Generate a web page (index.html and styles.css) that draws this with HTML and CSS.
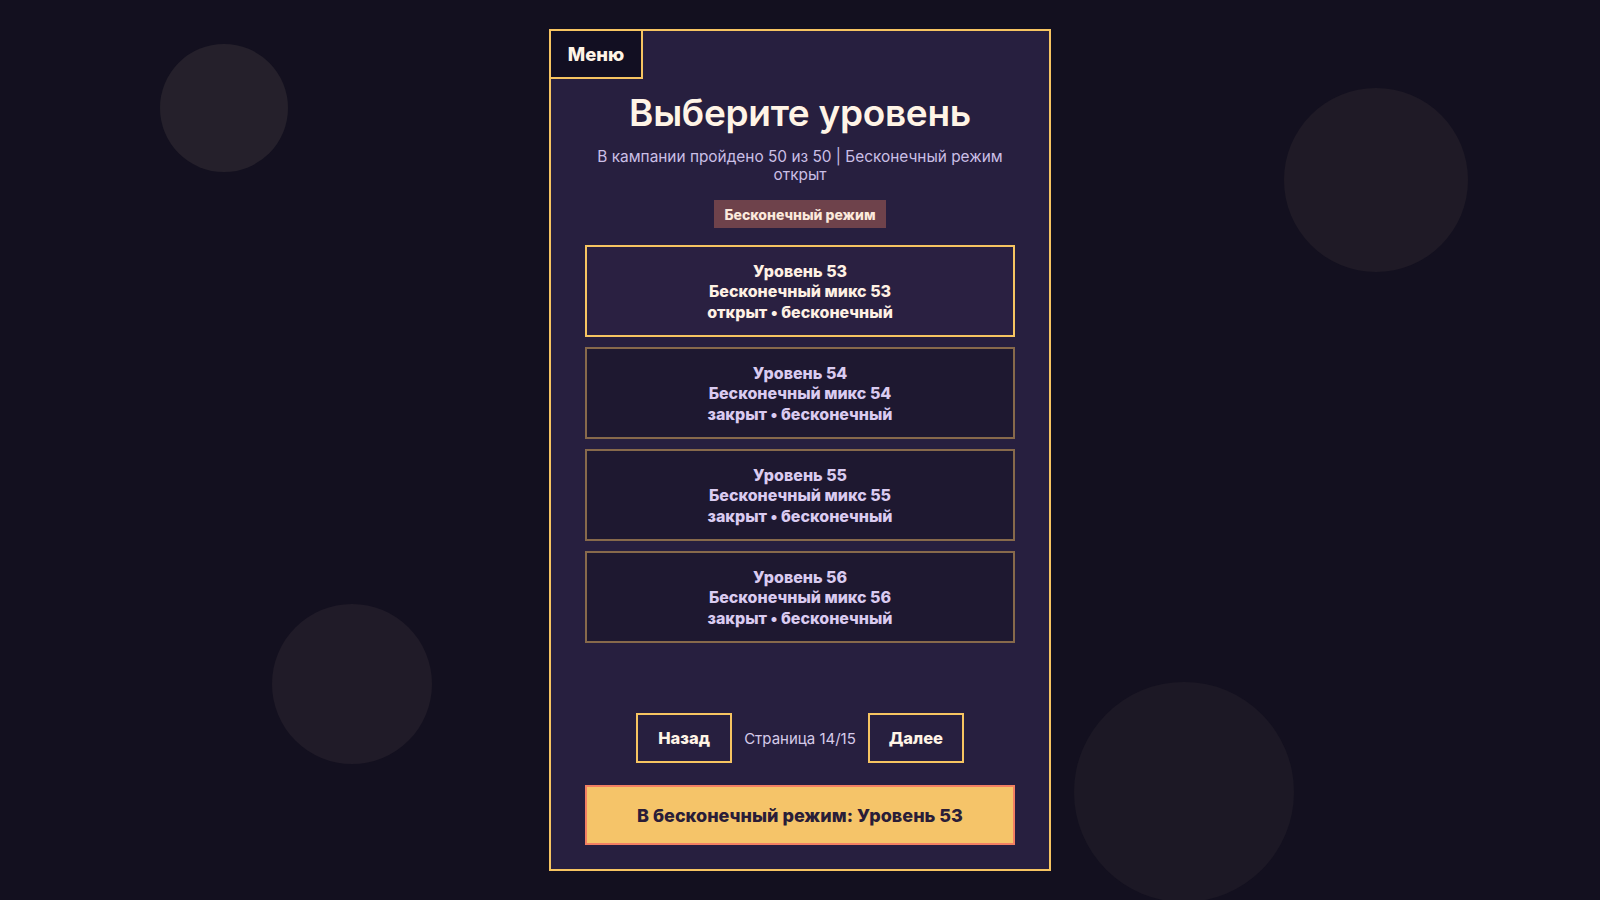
FILE: index.html
```html
<!DOCTYPE html>
<html lang="ru">
<head>
<meta charset="utf-8">
<title>Выберите уровень</title>
<link rel="stylesheet" href="styles.css">
</head>
<body>
<div class="bg-circle c1"></div>
<div class="bg-circle c2"></div>
<div class="bg-circle c3"></div>
<div class="bg-circle c4"></div>

<main class="panel">
  <button class="menu-btn">Меню</button>
  <h1 class="title">Выберите уровень</h1>
  <p class="subtitle">В кампании пройдено 50 из 50 | Бесконечный режим открыт</p>
  <div class="badge">Бесконечный режим</div>

  <div class="levels">
    <div class="level open">
      <span>Уровень 53</span>
      <span>Бесконечный микс 53</span>
      <span>открыт • бесконечный</span>
    </div>
    <div class="level locked">
      <span>Уровень 54</span>
      <span>Бесконечный микс 54</span>
      <span>закрыт • бесконечный</span>
    </div>
    <div class="level locked">
      <span>Уровень 55</span>
      <span>Бесконечный микс 55</span>
      <span>закрыт • бесконечный</span>
    </div>
    <div class="level locked">
      <span>Уровень 56</span>
      <span>Бесконечный микс 56</span>
      <span>закрыт • бесконечный</span>
    </div>
  </div>

  <div class="pager">
    <button class="pager-btn">Назад</button>
    <span class="pager-text">Страница 14/15</span>
    <button class="pager-btn">Далее</button>
  </div>

  <button class="cta">В бесконечный режим: Уровень 53</button>
</main>
</body>
</html>
```

FILE: styles.css
```css
* { box-sizing: border-box; }

html, body {
  margin: 0;
  padding: 0;
  width: 1600px;
  height: 900px;
  overflow: hidden;
  background: #13101f;
  font-family: Inter, "Noto Sans", sans-serif;
}

body {
  position: relative;
  padding-top: 29px;
}

.bg-circle {
  position: absolute;
  border-radius: 50%;
  background: #211c29;
}
.c1 { left: 160px; top: 44px; width: 128px; height: 128px; background: #25202b; }
.c2 { left: 1284px; top: 88px; width: 184px; height: 184px; background: #1f1a26; }
.c3 { left: 272px; top: 604px; width: 160px; height: 160px; background: #201b28; }
.c4 { left: 1074px; top: 682px; width: 220px; height: 220px; background: #1c1825; }

.panel {
  position: relative;
  width: 502px;
  height: 842px;
  margin: 0 auto;
  border: 2px solid #f6c461;
  background: #271f3f;
  padding: 61px 34px 24px;
  display: flex;
  flex-direction: column;
  align-items: center;
}

.menu-btn {
  position: absolute;
  top: -2px;
  left: -2px;
  width: 94px;
  height: 50px;
  border: 2px solid #f6c461;
  background: #120f22;
  color: #fff4e6;
  font-family: inherit;
  font-size: 18.5px;
  font-weight: 800;
  padding: 0;
}

.title {
  margin: 0;
  color: #fff4e6;
  font-size: 37px;
  font-weight: 600;
  line-height: 42px;
  letter-spacing: -0.3px;
}

.subtitle {
  margin: 14px 0 0;
  color: #cbbfe6;
  font-size: 15.4px;
  line-height: 18px;
  text-align: center;
  max-width: 420px;
}

.badge {
  margin-top: 16px;
  height: 28px;
  padding: 0 10px;
  display: flex;
  align-items: center;
  background: #6e424b;
  color: #fbe9dc;
  font-size: 14px;
  font-weight: 800;
}

.levels {
  margin-top: 17px;
  width: 430px;
  display: flex;
  flex-direction: column;
  gap: 10px;
  flex: 1;
}

.level {
  height: 92px;
  display: flex;
  flex-direction: column;
  align-items: center;
  justify-content: center;
  padding-top: 1px;
  font-size: 16px;
  font-weight: 800;
  line-height: 20.4px;
}
.level.open {
  border: 2px solid #f6c461;
  background: #2a2041;
  color: #fff1e4;
}
.level.locked {
  border: 2px solid #87694b;
  background: #1e1830;
  color: #dacbf0;
}

.pager {
  display: flex;
  align-items: center;
  gap: 12px;
}

.pager-btn {
  width: 96px;
  height: 50px;
  border: 2px solid #f6c461;
  background: transparent;
  color: #fff4e6;
  font-family: inherit;
  font-size: 16.5px;
  font-weight: 800;
  padding: 0;
}

.pager-text {
  color: #d6cbe9;
  font-size: 15px;
}

.cta {
  margin-top: 22px;
  width: 430px;
  height: 60px;
  border: 2px solid #f27f62;
  background: #f5c469;
  color: #2a1d38;
  font-family: inherit;
  font-size: 18px;
  font-weight: 800;
  padding: 0;
}
```
